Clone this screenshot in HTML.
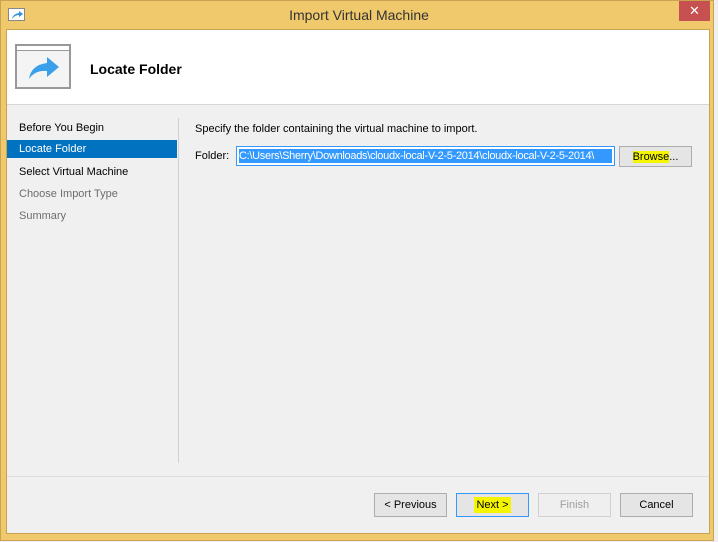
<!DOCTYPE html>
<html><head><style>
*{margin:0;padding:0;box-sizing:border-box}
body{width:718px;height:542px;background:#f0f0f0;font-family:"Liberation Sans",sans-serif;font-size:11px;color:#000;position:relative;overflow:hidden}
.frame{position:absolute;left:0;top:0;width:714px;height:541px;background:#f0c96c;border:1px solid #c9a350}
.abs{position:absolute}
.client{position:absolute;left:7px;top:30px;width:702px;height:503px;background:#f0f0f0;outline:1px solid #c9a350}
.btn{position:absolute;height:24px;border:1px solid #adadad;background:#e5e5e5;text-align:center;line-height:22px;font-size:11px}
</style></head><body>
<div class="frame"></div>
<div class="abs" style="left:8px;top:8px;width:17px;height:13px;border:1px solid #888;background:#fff"><svg width="15" height="11"><path d="M3 10 Q4 5 10 4 L10 2 L14 5 L10 8 L10 6 Q6 6 3 10Z" fill="#2f8fe0"/></svg></div>
<div class="abs" style="left:0;top:7px;width:718px;text-align:center;font-size:14px;color:#333">Import Virtual Machine</div>
<div class="abs" style="left:679px;top:1px;width:31px;height:20px;background:#c75050;color:#fff;text-align:center;font-size:13px;line-height:19px">✕</div>
<div class="client">
 <div class="abs" style="left:0;top:0;width:702px;height:75px;background:#fff;border-bottom:1px solid #d6d6d6"></div>
 <div class="abs" style="left:8px;top:14px;width:56px;height:45px;border:2px solid #999;background:#f4f4f4">
  <div style="height:5px;border-bottom:1px solid #999;background:#fff"></div>
  <svg width="52" height="36" style="position:absolute;left:0;top:5px"><path d="M12 28 Q14 14 30 12 L30 6 L42 16 L30 26 L30 20 Q18 19 12 28Z" fill="#3aa0ea"/></svg>
 </div>
 <div class="abs" style="left:83px;top:31px;font-size:14px;font-weight:bold">Locate Folder</div>
 <div class="abs" style="left:12px;top:92px">Before You Begin</div>
 <div class="abs" style="left:0;top:110px;width:170px;height:18px;background:#0072c0"></div>
 <div class="abs" style="left:12px;top:113px;color:#fff">Locate Folder</div>
 <div class="abs" style="left:12px;top:136px">Select Virtual Machine</div>
 <div class="abs" style="left:12px;top:158px;color:#6d6d6d">Choose Import Type</div>
 <div class="abs" style="left:12px;top:180px;color:#6d6d6d">Summary</div>
 <div class="abs" style="left:171px;top:88px;width:1px;height:345px;background:#d0d0d0"></div>
 <div class="abs" style="left:188px;top:93px">Specify the folder containing the virtual machine to import.</div>
 <div class="abs" style="left:188px;top:120px">Folder:</div>
 <div class="abs" style="left:229px;top:116px;width:379px;height:20px;border:1px solid #3399ff;background:#fff;padding:2px">
  <div style="background:#3399ff;color:#fff;height:14px;line-height:14px;white-space:nowrap;overflow:hidden;font-size:11px;letter-spacing:-0.3px">C:\Users\Sherry\Downloads\cloudx-local-V-2-5-2014\cloudx-local-V-2-5-2014\</div>
 </div>
 <div class="btn" style="left:612px;top:116px;width:73px;height:21px;line-height:20px"><span style="background:#f5f500">Browse</span>...</div>
 <div class="abs" style="left:0;top:446px;width:702px;height:1px;background:#dcdcdc"></div>
 <div class="btn" style="left:367px;top:463px;width:73px">&lt; Previous</div>
 <div class="btn" style="left:449px;top:463px;width:73px;border-color:#3399ff"><span style="background:#f5f500;padding:2px">Next &gt;</span></div>
 <div class="btn" style="left:531px;top:463px;width:73px;color:#a0a0a0;border-color:#d0d0d0;background:#efefef">Finish</div>
 <div class="btn" style="left:613px;top:463px;width:73px">Cancel</div>
</div>
</body></html>
